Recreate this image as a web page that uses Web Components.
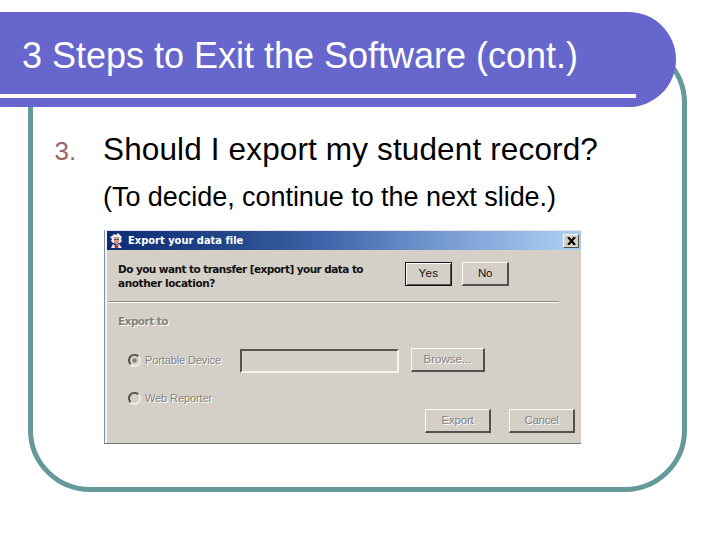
<!DOCTYPE html>
<html lang="en"><head><meta charset="utf-8"><title>3 Steps to Exit the Software</title>
<style>
html,body{margin:0;width:720px;height:537px;overflow:hidden;background:#fff;font-family:"Liberation Sans",Arial,sans-serif}
</style></head><body>
<slide-page></slide-page>
<script>
const define=(name,html,init)=>customElements.define(name,class extends HTMLElement{
  constructor(){super();this.attachShadow({mode:'open'}).innerHTML=html;}
  connectedCallback(){if(init)init.call(this);}
});

// One line of text, tracked so that it spans the given width.
define('fit-text',`<style>:host{display:block;white-space:pre}span{display:inline-block}</style><span><slot></slot></span>`,function(){
  const s=this.shadowRoot.querySelector('span'),w=+this.getAttribute('width');
  s.style.letterSpacing=(w-s.getBoundingClientRect().width)/this.textContent.length+'px';
});

define('push-button',`<style>
:host{display:block;box-sizing:border-box;height:24px;background:#d4d0c8;font-size:11.5px;color:#111}
div{box-sizing:border-box;height:100%;display:flex;align-items:center;justify-content:center;border:solid;border-width:1px 2px 2px 1px;border-color:#faf9f4 #55504f #55504f #faf9f4;padding-bottom:1px}
:host([primary]) div{border:1px solid #181818;box-shadow:inset 1px 1px #fff,inset -1px -1px #55504f;padding-bottom:2px}
:host([disabled]){color:#85827d;text-shadow:1px 1px #fff}
</style><div><slot></slot></div>`);

define('radio-option',`<style>
:host{display:flex;align-items:center;gap:4px;font-size:11px;color:#85827d;text-shadow:1px 1px #fff;height:14px}
svg{display:block;flex:none}circle{display:none}:host([checked]) circle{display:block}
</style><svg width="13" height="13" viewBox="0 0 13 13" fill="none"><path d="M2.5 10.5A5.3 5.3 0 0 0 10.5 2.5" stroke="#f8f7f2" stroke-width="1.3"/><path d="M2.6 10.2A5 5 0 0 1 10.2 2.4" stroke="#5b5552" stroke-width="2"/><circle cx="6.5" cy="6.5" r="2.2" fill="#85807c"/></svg><slot></slot>`);

define('title-bar',`<style>
:host{display:flex;box-sizing:border-box;height:19px;align-items:center;padding:0 2px 0 3px;background:linear-gradient(90deg,#0d2c74 0,#234689 25%,#3f62a8 45%,#7095cd 68%,#a6caf0 96%);color:#fff;font:bold 11px/16px "DejaVu Sans Condensed","DejaVu Sans",sans-serif}
fit-text{flex:1;margin-left:5px}
.x{box-sizing:border-box;width:16px;height:14px;background:#d4d0c8;border:1px solid;border-color:#fff #504d4a #504d4a #fff;display:flex;align-items:center;justify-content:center}
svg{display:block}
</style>
<svg width="13" height="16" viewBox="0 0 13 16"><path d="M2 3 4 1 6 2 8 0 10 2 12 4 11 6 12 8 10 10 3 10 1 8 2 6 0 4Z" fill="#e9edf0"/><path d="M4 4h5v6l-2 2-3-2Z" fill="#c99483"/><path d="M4 6h2v1H4zm3 0h2v1H7z" fill="#35466b"/><path d="M1 15 3 11 6 13 9 11 12 15Z" fill="#f5f4f0"/><path d="M4 12 6 13 9 12 8 15H5Z" fill="#be2839"/></svg>
<fit-text width="115">Export your data file</fit-text>
<div class="x"><svg width="9" height="8" viewBox="0 0 9 8"><path d="M1 0 8 8M8 0 1 8" stroke="#000" stroke-width="2.2"/></svg></div>`);

define('export-dialog',`<style>
:host{display:block;box-sizing:border-box;width:477px;height:214px;background:#d4d0c8;border-left:1px solid #7f93ad;border-bottom:1px solid #77746f;border-top:1px solid #e5e5e8}
.in{border-left:2px solid #f4f4f2;height:212px;box-sizing:border-box}
.ask{display:flex;height:51px;padding:12px 0 0 11px;box-sizing:border-box}
.b{font:bold 10.5px/14px "DejaVu Sans","Liberation Sans",sans-serif;color:#111}
.q{width:287px}.ask push-button{width:47px;margin-right:10px}
.rule{height:1px;width:451px;background:#8d8983;border-bottom:1px solid #fff;margin-left:1px}
.to{padding:11px 0 0 11px;color:#85827d;text-shadow:1px 1px #fff}
.dev{display:flex;padding:20px 0 0 21px}
.dev radio-option{width:112px;margin-top:5px}
.field{box-sizing:border-box;width:159px;height:24px;margin-top:1px;border:2px solid;border-color:#5a5352 #f5f3eb #f5f3eb #5a5352;margin-right:12px}
.dev push-button{width:74px}
.web{padding:18px 0 0 21px}
.acts{display:flex;gap:18px;padding:4px 0 0 318px}.acts push-button{width:66px}
</style>
<div class="in"><title-bar></title-bar>
<div class="ask"><div class="q b"><fit-text width="245">Do you want to transfer [export] your data to</fit-text><fit-text width="97">another location?</fit-text></div><push-button primary><fit-text width="20">Yes</fit-text></push-button><push-button><fit-text width="14">No</fit-text></push-button></div>
<div class="rule"></div>
<div class="to b"><fit-text width="50">Export to</fit-text></div>
<div class="dev"><radio-option checked><fit-text width="76">Portable Device</fit-text></radio-option><div class="field"></div><push-button disabled><fit-text width="48">Browse...</fit-text></push-button></div>
<div class="web"><radio-option><fit-text width="67">Web Reporter</fit-text></radio-option></div>
<div class="acts"><push-button disabled><fit-text width="32">Export</fit-text></push-button><push-button disabled><fit-text width="34">Cancel</fit-text></push-button></div></div>`);

define('slide-title',`<style>
:host{display:block;position:relative;z-index:1;box-sizing:border-box;width:675.5px;height:95px;background:#6666cc;border-radius:0 47.5px 47.5px 0;color:#fff;font-size:36px;line-height:42px}
.t{height:82px;box-sizing:border-box;padding:23px 0 0 22px}
.l{height:4px;width:636px;background:#fff}
</style><div class="t"><slot></slot></div><div class="l"></div>`);

define('slide-frame',`<style>
:host{display:block;box-sizing:border-box;width:659px;height:451px;margin:-66px 0 0 28px;border:5px solid #669999;border-radius:62px;padding:84px 0 0 21px}
</style><slot></slot>`);

define('slide-page',`<style>
:host{display:flow-root;padding-top:12px;width:720px;box-sizing:border-box}
.step{display:flex;align-items:baseline;height:50px;font-size:31.5px;line-height:38px}
.n{width:49px;font-size:26px;padding-left:.5px;box-sizing:border-box}
.sub{margin-left:49px;font-size:27px;line-height:34px}
export-dialog{margin:16px 0 0 50px}
.sub,.step{color:#000}
.step .n{color:#996666}
</style>
<slide-title><fit-text width="556">3 Steps to Exit the Software (cont.)</fit-text></slide-title>
<slide-frame>
<div class="step"><fit-text class="n" width="22">3.</fit-text><fit-text width="495">Should I export my student record?</fit-text></div>
<div class="sub"><fit-text width="453">(To decide, continue to the next slide.)</fit-text></div>
<export-dialog></export-dialog>
</slide-frame>`);
</script></body></html>
